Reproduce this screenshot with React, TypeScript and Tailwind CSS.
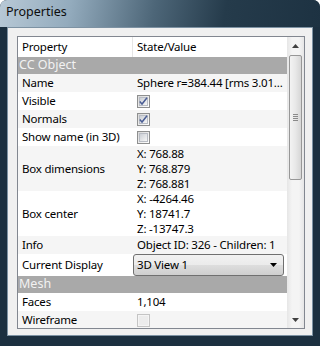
import React from "react";

const font = { fontFamily: '"Noto Sans", "DejaVu Sans", sans-serif' };

function CheckBox({ checked, disabled }: { checked?: boolean; disabled?: boolean }) {
  return (
    <div
      className={
        "w-[13px] h-[13px] border flex items-center justify-center " +
        (disabled ? "border-[#c4c4c4] bg-[#f4f4f4]" : "border-[#8e8f8f] bg-[linear-gradient(135deg,#d8d8d8,#ffffff)]")
      }
    >
      <div
        className={
          "w-[9px] h-[9px] flex items-center justify-center " +
          (disabled ? "bg-[#ececec]" : "bg-[linear-gradient(135deg,#cbcfd5,#f6f6f6)] border border-[#b8bcc4]")
        }
      >
        {checked && (
          <svg width="9" height="9" viewBox="0 0 9 9" className="overflow-visible">
            <path d="M0.8 4.6 L3 7 L8 0.8" fill="none" stroke="#4a5d94" strokeWidth="1.5" />
          </svg>
        )}
      </div>
    </div>
  );
}

type Row = {
  label: string;
  h: string;
  alt?: boolean;
  value?: React.ReactNode;
  section?: boolean;
};

function Lines({ items }: { items: string[] }) {
  return (
    <div className="flex flex-col">
      {items.map((t) => (
        <span key={t} className="h-[15px] leading-[15px] whitespace-nowrap">
          {t}
        </span>
      ))}
    </div>
  );
}

const rows: Row[] = [
  { label: "CC Object", h: "h-[17px]", section: true },
  { label: "Name", h: "h-[18px]", alt: true, value: <span className="whitespace-nowrap">Sphere r=384.44 [rms 3.01...</span> },
  { label: "Visible", h: "h-[18px]", value: <CheckBox checked /> },
  { label: "Normals", h: "h-[18px]", alt: true, value: <CheckBox checked /> },
  { label: "Show name (in 3D)", h: "h-[18px]", value: <CheckBox /> },
  { label: "Box dimensions", h: "h-[45px]", alt: true, value: <Lines items={["X: 768.88", "Y: 768.879", "Z: 768.881"]} /> },
  { label: "Box center", h: "h-[45px]", value: <Lines items={["X: -4264.46", "Y: 18741.7", "Z: -13747.3"]} /> },
  { label: "Info", h: "h-[18px]", alt: true, value: <span className="whitespace-nowrap">Object ID: 326 - Children: 1</span> },
  {
    label: "Current Display",
    h: "h-[22px]",
    value: (
      <div className="w-[151px] h-[22px] -ml-[4px] rounded-[3px] border border-[#707070] bg-[linear-gradient(#f2f2f2,#ebebeb_50%,#dddddd_51%,#cfcfcf)] flex items-center justify-between pl-[3px] pr-[6px]">
        <span>3D View 1</span>
        <svg width="7" height="4" viewBox="0 0 7 4">
          <path d="M0 0 H7 L3.5 4 Z" fill="#000" />
        </svg>
      </div>
    ),
  },
  { label: "Mesh", h: "h-[17px]", section: true },
  { label: "Faces", h: "h-[18px]", value: <span>1,104</span> },
  { label: "Wireframe", h: "h-[18px]", alt: true, value: <CheckBox disabled /> },
];

export default function App() {
  return (
    <div
      className="w-[320px] h-[346px] bg-[#1c3040] rounded-t-[7px] flex flex-col overflow-hidden text-[11.5px] tracking-[-0.2px] text-black"
      style={font}
    >
      {/* title bar */}
      <div className="h-[27px] shrink-0 bg-[linear-gradient(100deg,#b8c9d6_0%,#93abbd_22%,#4d6678_48%,#253b4b_70%,#1d3242_100%)] flex items-center pl-[6px] pb-[2px]">
        <span className="text-[12.5px] tracking-normal text-[#0d0d0d]">Properties</span>
      </div>

      {/* client area */}
      <div className="mx-[7px] h-[309px] border border-[#7d92a3] bg-[#f0f0f0] pl-[9px] pr-[7px] pt-[8px]">
        <div className="h-[293px] border border-[#828790] bg-white flex overflow-hidden">
          <div className="flex-1 flex flex-col overflow-hidden">
            {/* header */}
            <div className="h-[20px] shrink-0 flex items-center bg-white">
              <div className="w-[115px] pl-[4px] border-r border-[#e5e5e5] h-full flex items-center">Property</div>
              <div className="pl-[4px]">State/Value</div>
            </div>
            {rows.map((r) =>
              r.section ? (
                <div
                  key={r.label}
                  className={r.h + " shrink-0 bg-[#a9a9a9] text-[#f2f2f2] pl-[1px] flex items-center text-[12.5px] tracking-normal"}
                >
                  {r.label}
                </div>
              ) : (
                <div key={r.label} className={r.h + " shrink-0 flex items-center " + (r.alt ? "bg-[#f5f5f5]" : "bg-white")}>
                  <div className="w-[115px] shrink-0 pl-[4px] whitespace-nowrap">{r.label}</div>
                  <div className="pl-[4px] flex-1 overflow-hidden">{r.value}</div>
                </div>
              )
            )}
          </div>

          {/* scrollbar */}
          <div className="w-[17px] shrink-0 bg-[linear-gradient(90deg,#e6e6e6,#f4f4f4_30%,#f4f4f4_70%,#e6e6e6)] flex flex-col items-center">
            <div className="h-[17px] w-full flex items-center justify-center">
              <svg width="7" height="4" viewBox="0 0 7 4">
                <path d="M0 4 H7 L3.5 0 Z" fill="#404040" />
              </svg>
            </div>
            <div className="w-[13px] h-[125px] mt-[1px] rounded-[2px] border border-[#979797] bg-[linear-gradient(90deg,#f3f3f3,#e8e8e8_50%,#d6d6d6)] flex items-center justify-center">
              <div className="flex flex-col gap-[1px]">
                <div className="w-[5px] h-px bg-[#8a8a8a]" />
                <div className="w-[5px] h-px bg-[#8a8a8a]" />
                <div className="w-[5px] h-px bg-[#8a8a8a]" />
                <div className="w-[5px] h-px bg-[#8a8a8a]" />
              </div>
            </div>
            <div className="flex-1" />
            <div className="h-[17px] w-full flex items-center justify-center">
              <svg width="7" height="4" viewBox="0 0 7 4">
                <path d="M0 0 H7 L3.5 4 Z" fill="#404040" />
              </svg>
            </div>
          </div>
        </div>
      </div>
    </div>
  );
}
